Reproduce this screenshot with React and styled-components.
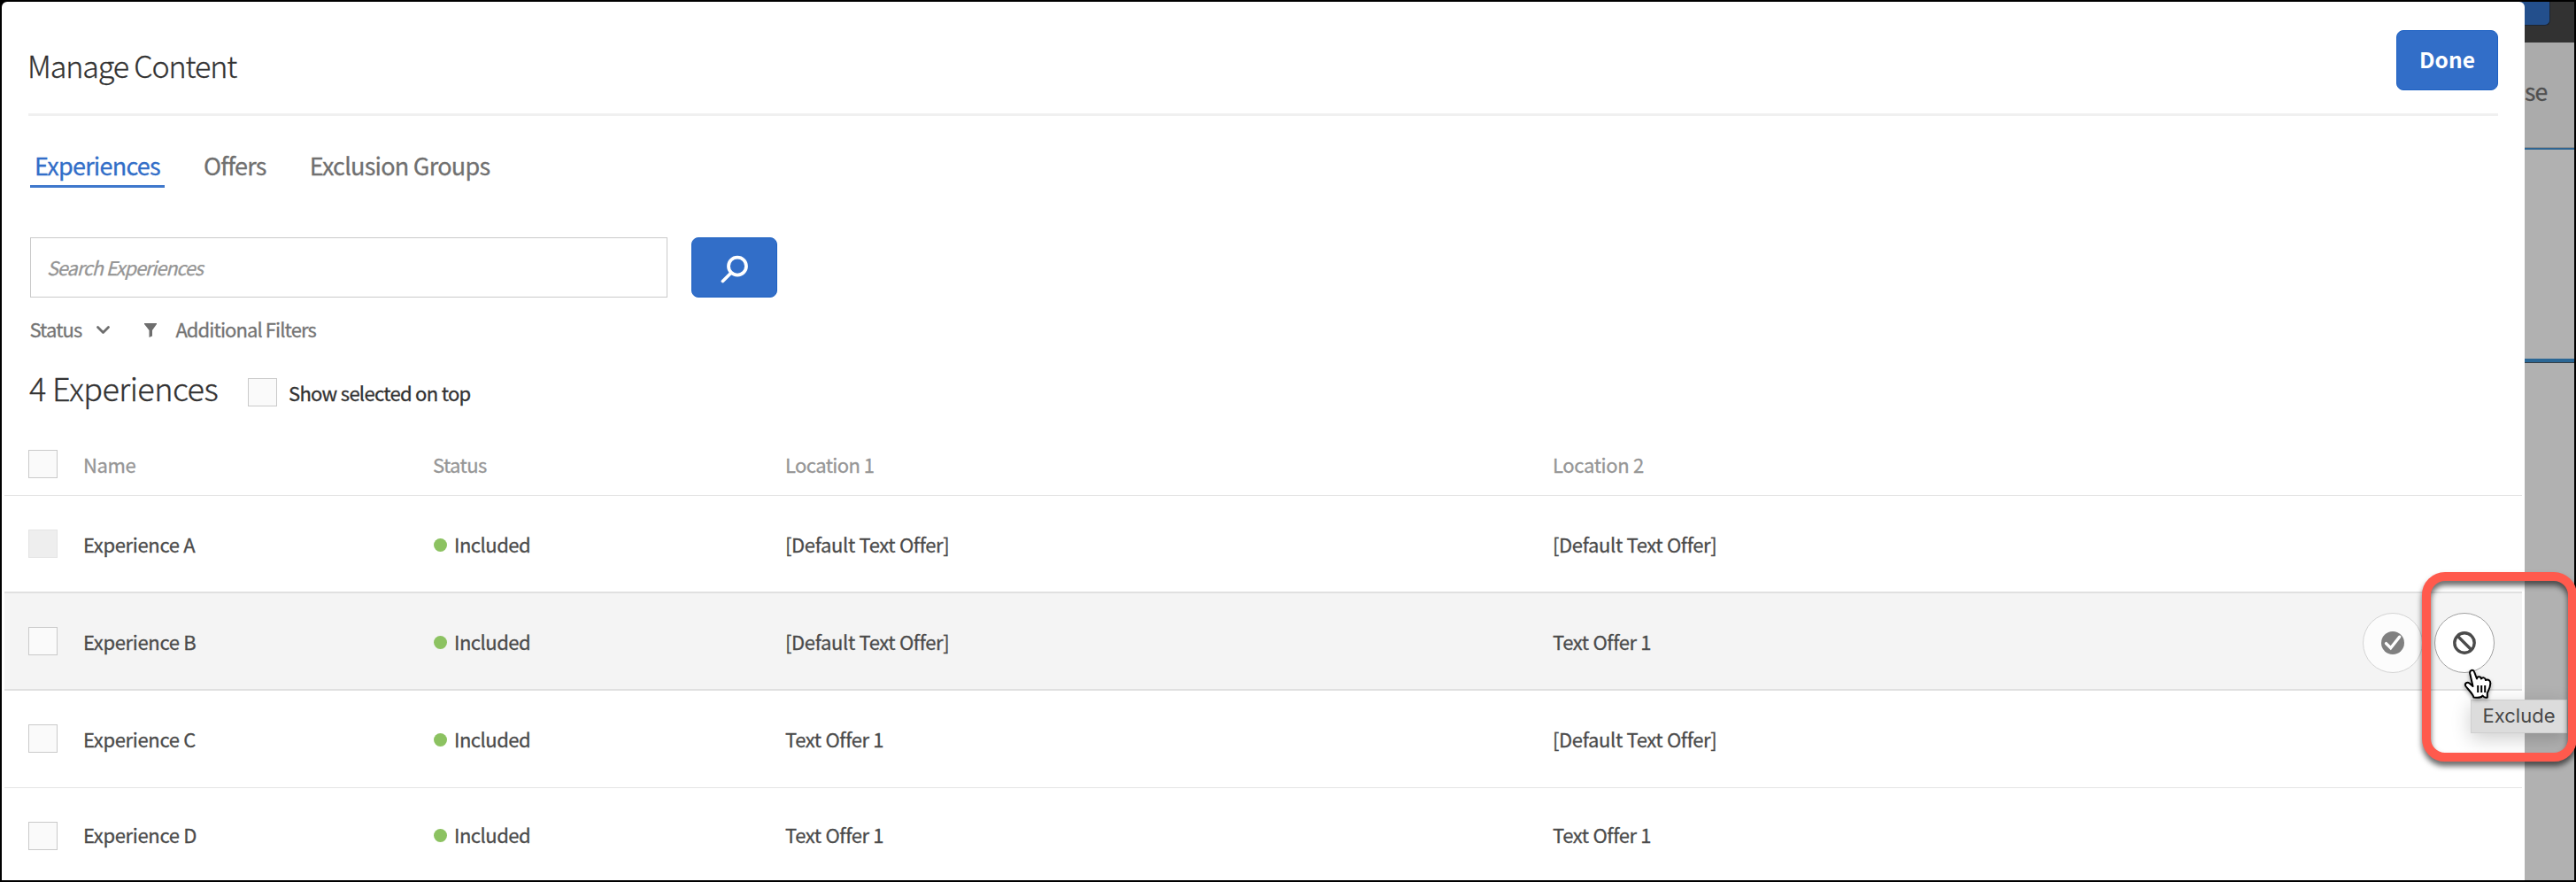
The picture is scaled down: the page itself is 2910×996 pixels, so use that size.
import React from 'react';
import styled, { createGlobalStyle, css } from 'styled-components';

const GlobalStyle = createGlobalStyle`
  *, *::before, *::after { box-sizing: border-box; }
  body { margin: 0; background: #000; }
`;

const Screen = styled.div`
  position: relative;
  display: flex;
  width: 2910px;
  height: 996px;
  padding: 2px;
  overflow: hidden;
  background: #000;
  font-family: 'Noto Sans CJK SC', 'Noto Sans', sans-serif;
  font-size: 22px;
  line-height: 32px;
  letter-spacing: -0.35px;
  -webkit-text-stroke: 0.3px currentColor;
  color: #4b4b4b;
  white-space: nowrap;
`;

const Modal = styled.main`
  position: relative;
  z-index: 1;
  flex: none;
  width: 2850px;
  height: 992px;
  background: #fff;
  border-radius: 6px 6px 0 0;
`;

const Header = styled.header`
  display: flex;
  justify-content: space-between;
  height: 129px;
  margin: 0 30px;
  padding: 32px 0 0;
  border-bottom: 3px solid #f0f0f0;
`;

const Title = styled.h1`
  margin: 12px 0 0 -1px;
  font-size: 34px;
  font-weight: 300;
  line-height: 56px;
  letter-spacing: -1.1px;
  color: #323232;
`;

const primary = css`
  border: 1px solid #1e61c2;
  border-radius: 8px;
  background: #326ec8;
  color: #fff;
`;

const DoneButton = styled.button`
  ${primary}
  width: 115px;
  height: 68px;
  padding: 0 0 2px;
  font: 700 24.5px/62px 'Noto Sans CJK SC', 'Noto Sans', sans-serif;
  letter-spacing: 0;
  -webkit-text-stroke: 0;
`;

const Tabs = styled.nav`
  display: flex;
  gap: 39px;
  margin: 35px 0 0 32px;
`;

const Tab = styled.a`
  height: 46px;
  padding: 0 5px;
  font-size: 27px;
  line-height: 41px;
  letter-spacing: -0.75px;
  color: ${(p) => (p.$active ? '#326ec8' : '#707070')};
  border-bottom: 3px solid ${(p) => (p.$active ? '#3f78cc' : 'transparent')};
`;

const SearchBar = styled.div`
  display: flex;
  gap: 27px;
  margin: 56px 0 0 32px;
`;

const SearchInput = styled.div`
  width: 720px;
  height: 68px;
  padding: 0 0 0 18px;
  border: 1px solid #cacaca;
  font-size: 21.5px;
  font-style: italic;
  line-height: 66px;
  letter-spacing: -0.95px;
  color: #959595;
`;

const SearchButton = styled.button`
  ${primary}
  display: flex;
  align-items: center;
  justify-content: center;
  width: 97px;
  height: 68px;
  padding: 4px 0 0;
`;

const Filters = styled.div`
  display: flex;
  align-items: center;
  height: 32px;
  margin: 19px 0 0 31.5px;
  letter-spacing: -0.9px;
  color: #747474;
`;

const FilterIcon = styled.svg`
  flex: none;
  margin: ${(p) => p.$margin};
`;

const Summary = styled.div`
  display: flex;
  align-items: center;
  height: 50px;
  margin: 29px 0 0 31px;
`;

const Count = styled.h2`
  width: 247px;
  margin: -8px 0 0;
  font-size: 36px;
  font-weight: 300;
  line-height: 50px;
  letter-spacing: -0.55px;
  color: #323232;
`;

const SummaryLabel = styled.span`
  margin: 3px 0 0 13px;
  letter-spacing: -0.7px;
  color: #323232;
`;

const Checkbox = styled.span`
  flex: none;
  display: block;
  width: 33px;
  height: 32px;
  margin-top: ${(p) => p.$top || '0'};
  border: 1px solid ${(p) => (p.$disabled ? '#e4e4e4' : '#cacaca')};
  background: ${(p) => (p.$disabled ? '#eeeeee' : '#fafafa')};
`;

const Table = styled.section`
  margin: 19px 3px 0;
`;

const Row = styled.div`
  position: relative;
  display: grid;
  grid-template-columns: 62px 395px 398px 867px 1fr;
  align-items: center;
  height: ${(p) => p.$height}px;
  padding: 0 0 1px 27px;
  border-bottom: 1px solid #e4e4e4;
  color: #4b4b4b;
  ${(p) =>
    p.$head &&
    css`
      padding-top: 4px;
      padding-bottom: 0;
      color: #969696;
    `}
  ${(p) =>
    p.$hover &&
    css`
      padding-bottom: 0;
      border-top: 2px solid #e0e0e0;
      border-bottom: 2px solid #e0e0e0;
      background: #f4f4f4;
    `}
  ${(p) =>
    p.$plain &&
    css`
      padding-bottom: 0;
      border-bottom: 0;
    `}
`;

const Cell = styled.span`
  display: flex;
  align-items: center;
  letter-spacing: ${(p) => p.$spacing || 'inherit'};
`;

const Dot = styled.i`
  width: 15px;
  height: 15px;
  margin: 2px 8px 0 1px;
  border-radius: 50%;
  background: #8cc261;
`;

const Actions = styled.div`
  position: absolute;
  right: 31px;
  top: 22px;
  display: flex;
  gap: 13px;
`;

const RoundButton = styled.button`
  display: flex;
  align-items: center;
  justify-content: center;
  width: 68px;
  height: 68px;
  padding: 0;
  border: 1px solid ${(p) => (p.$active ? '#a0a0a0' : '#d4d4d4')};
  border-radius: 50%;
  background: ${(p) => (p.$active ? '#ffffff' : '#fcfcfc')};
`;

const Backdrop = styled.aside`
  flex: none;
  width: 56px;
  background: #b1b1b1;
`;

const BackdropBar = styled.div`
  height: 46px;
  margin-left: -8px;
  background: #323232;
`;

const BackdropButton = styled.div`
  width: 37px;
  height: 27px;
  background: #234f8c;
  border: solid #1d2530;
  border-width: 0 1px 1px 0;
  border-radius: 0 0 6px 0;
`;

const BackdropHeading = styled.div`
  height: 121px;
  padding-top: 33px;
  background: #ababab;
  border-bottom: 2px solid #2f6592;
  box-shadow: inset 0 -1px #8f8f8f;
  font-size: 26.5px;
  line-height: 44px;
  letter-spacing: -0.8px;
  color: #505050;
`;

const BackdropLine = styled.div`
  height: 5px;
  margin-top: 236px;
  background: #2b6795;
  border-bottom: 1px solid #363e44;
`;

const Tooltip = styled.div`
  position: absolute;
  z-index: 2;
  left: 2791px;
  top: 790px;
  width: 109px;
  height: 38px;
  background: #dcdcdc;
  border: 1px solid #cfcfcf;
  box-shadow: 0 6px 22px rgba(0, 0, 0, 0.2);
  text-align: center;
  font: 400 22px/35px Inter, sans-serif;
  letter-spacing: 0;
  -webkit-text-stroke: 0;
  color: #484848;
`;

const Pointer = styled.svg`
  position: absolute;
  z-index: 4;
  left: 2780px;
  top: 752px;
  filter: drop-shadow(0 2px 2px rgba(0, 0, 0, 0.35));
`;

const Callout = styled.div`
  position: absolute;
  z-index: 3;
  left: 2736px;
  top: 646px;
  width: 175px;
  height: 214px;
  border: 10px solid #ff5a4d;
  border-radius: 26px;
  filter: drop-shadow(0 5px 3px rgba(0, 0, 0, 0.6));
`;

const experiences = [
  { name: 'Experience A', one: '[Default Text Offer]', two: '[Default Text Offer]', height: 108, disabled: true },
  { name: 'Experience B', one: '[Default Text Offer]', two: 'Text Offer 1', height: 112, hover: true },
  { name: 'Experience C', one: 'Text Offer 1', two: '[Default Text Offer]', height: 110 },
  { name: 'Experience D', one: 'Text Offer 1', two: 'Text Offer 1', height: 104, last: true },
];

function ExperienceRow({ name, one, two, height, disabled, hover, last }) {
  return (
    <Row $height={height} $hover={hover} $plain={disabled || last}>
      <Checkbox $disabled={disabled} $top={last ? '3px' : undefined} />
      <Cell>{name}</Cell>
      <Cell $spacing="-0.5px">
        <Dot />
        Included
      </Cell>
      <Cell>{one}</Cell>
      <Cell>{two}</Cell>
      {hover && (
        <Actions>
          <RoundButton>
            <svg width="26" height="26" viewBox="0 0 26 26">
              <circle cx="13" cy="13" r="13" fill="#808080" />
              <path d="M5.5 13.6 10.7 18.8 20.6 6.2" fill="none" stroke="#fff" strokeWidth="3.4" strokeLinecap="round" />
            </svg>
          </RoundButton>
          <RoundButton $active>
            <svg width="26" height="26" viewBox="0 0 26 26" fill="none" stroke="#4b4b4b" strokeWidth="3.4">
              <circle cx="13" cy="13" r="11.2" />
              <path d="M5 5 21 21" />
            </svg>
          </RoundButton>
        </Actions>
      )}
    </Row>
  );
}

export default function App() {
  return (
    <>
      <GlobalStyle />
      <Screen>
        <Modal>
          <Header>
            <Title>Manage Content</Title>
            <DoneButton>Done</DoneButton>
          </Header>
          <Tabs>
            <Tab $active>Experiences</Tab>
            <Tab>Offers</Tab>
            <Tab>Exclusion Groups</Tab>
          </Tabs>
          <SearchBar>
            <SearchInput>Search Experiences</SearchInput>
            <SearchButton>
              <svg width="32" height="32" viewBox="0 0 32 32" fill="none" stroke="#fff" strokeWidth="3.8" strokeLinecap="round">
                <circle cx="19" cy="12.6" r="10" />
                <path d="M11.5 20.5 2.5 29.5" />
              </svg>
            </SearchButton>
          </SearchBar>
          <Filters>
            Status
            <FilterIcon $margin="3px 38px 0 16px" width="17" height="12" viewBox="0 0 17 12">
              <path d="M2.5 2.5 8.5 8.5 14.5 2.500" fill="none" stroke="#6e6e6e" strokeWidth="2.8" strokeLinecap="round" strokeLinejoin="round" />
            </FilterIcon>
            <FilterIcon $margin="4px 21px 0 0" width="14" height="16" viewBox="0 0 14 16">
              <path d="M0 0H14V1L9 8V14.5L5.5 16V8L0 1Z" fill="#6e6e6e" />
            </FilterIcon>
            Additional Filters
          </Filters>
          <Summary>
            <Count>4 Experiences</Count>
            <Checkbox $top="4px" />
            <SummaryLabel>Show selected on top</SummaryLabel>
          </Summary>
          <Table>
            <Row $head $height={75}>
              <Checkbox />
              <Cell>Name</Cell>
              <Cell $spacing="-0.6px">Status</Cell>
              <Cell $spacing="-0.6px">Location 1</Cell>
              <Cell>Location 2</Cell>
            </Row>
            {experiences.map((item) => (
              <ExperienceRow key={item.name} {...item} />
            ))}
          </Table>
        </Modal>
        <Backdrop>
          <BackdropBar>
            <BackdropButton />
          </BackdropBar>
          <BackdropHeading>se</BackdropHeading>
          <BackdropLine />
        </Backdrop>
        <Tooltip>Exclude</Tooltip>
        <Callout />
        <Pointer width="40" height="40" viewBox="0 0 40 40" stroke="#000" strokeWidth="2" strokeLinejoin="round">
          <path
            fill="#fff"
            d="M14.5 35.5C13.5 31.5 8.5 27 5.5 23C3.5 20 7 17.5 9.5 19.5L13.5 23L10.2 8.5C9.5 4.5 14 3.5 15.2 7L18 14.5C18 11.5 22.5 11.5 23 14.5C24.5 12.500 27.5 13 28 16C31 14.5 33.5 17 33.3 20C33 25 31.5 27 29.8 30.5V35.5C27.5 36.5 26 35.5 24.5 33.5C23 36.5 19 36 14.5 35.5Z"
          />
          <path fill="none" d="M19.2 22V30M23.2 22V30M27.2 22V30" />
        </Pointer>
      </Screen>
    </>
  );
}
